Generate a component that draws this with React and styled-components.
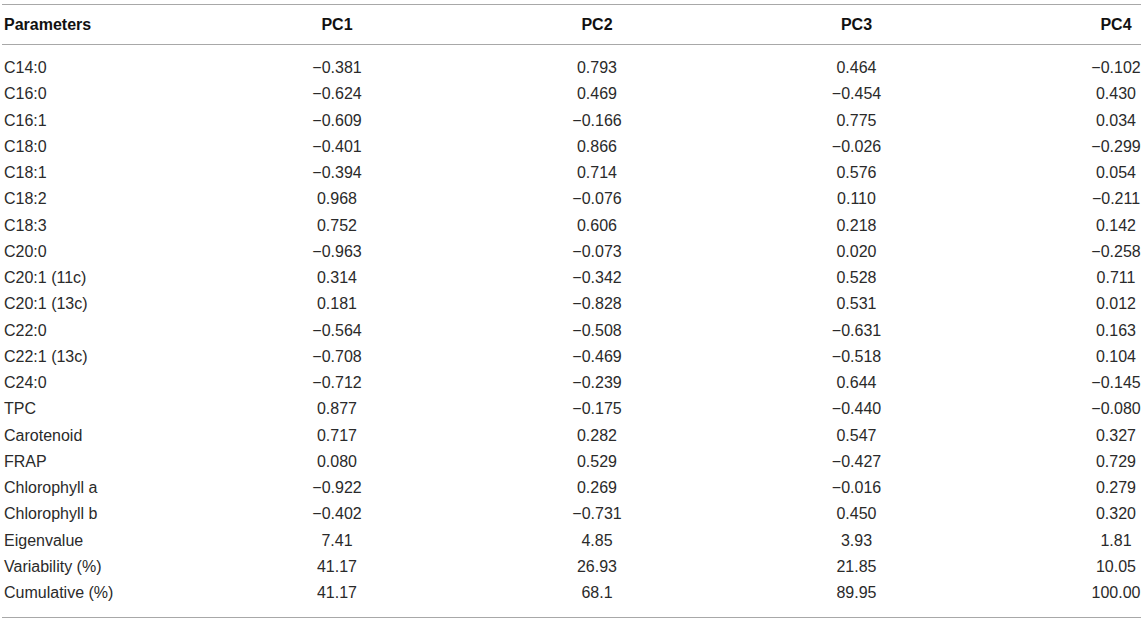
import React from 'react';
import styled, { createGlobalStyle } from 'styled-components';

const GlobalStyle = createGlobalStyle`
  body {
    margin: 0;
    background: #ffffff;
    font-family: "Liberation Sans", Arial, Helvetica, sans-serif;
  }
`;

const columns = ['Parameters', 'PC1', 'PC2', 'PC3', 'PC4'];

const rows = [
  ['C14:0', '−0.381', '0.793', '0.464', '−0.102'],
  ['C16:0', '−0.624', '0.469', '−0.454', '0.430'],
  ['C16:1', '−0.609', '−0.166', '0.775', '0.034'],
  ['C18:0', '−0.401', '0.866', '−0.026', '−0.299'],
  ['C18:1', '−0.394', '0.714', '0.576', '0.054'],
  ['C18:2', '0.968', '−0.076', '0.110', '−0.211'],
  ['C18:3', '0.752', '0.606', '0.218', '0.142'],
  ['C20:0', '−0.963', '−0.073', '0.020', '−0.258'],
  ['C20:1 (11c)', '0.314', '−0.342', '0.528', '0.711'],
  ['C20:1 (13c)', '0.181', '−0.828', '0.531', '0.012'],
  ['C22:0', '−0.564', '−0.508', '−0.631', '0.163'],
  ['C22:1 (13c)', '−0.708', '−0.469', '−0.518', '0.104'],
  ['C24:0', '−0.712', '−0.239', '0.644', '−0.145'],
  ['TPC', '0.877', '−0.175', '−0.440', '−0.080'],
  ['Carotenoid', '0.717', '0.282', '0.547', '0.327'],
  ['FRAP', '0.080', '0.529', '−0.427', '0.729'],
  ['Chlorophyll a', '−0.922', '0.269', '−0.016', '0.279'],
  ['Chlorophyll b', '−0.402', '−0.731', '0.450', '0.320'],
  ['Eigenvalue', '7.41', '4.85', '3.93', '1.81'],
  ['Variability (%)', '41.17', '26.93', '21.85', '10.05'],
  ['Cumulative (%)', '41.17', '68.1', '89.95', '100.00'],
];

const App = () => (
  <>
    <GlobalStyle />
    <Table>
      <HeaderRow>
        {columns.map((c, i) => (
          <HeadCell key={c} $first={i === 0} $last={i === columns.length - 1}>
            {c}
          </HeadCell>
        ))}
      </HeaderRow>
      <Body>
        {rows.map((r) => (
          <Row key={r[0]}>
            {r.map((v, i) => (
              <Cell key={i} $first={i === 0} $last={i === r.length - 1}>
                {v}
              </Cell>
            ))}
          </Row>
        ))}
      </Body>
    </Table>
  </>
);

// Styled Components
const grid = `
  display: grid;
  grid-template-columns: 205px 260px 260px 259px 155px;
  align-items: center;
`;

const Table = styled.div`
  margin: 4px 0 0 2px;
  width: 1139px;
  border-top: 1px solid #a8a8a8;
  border-bottom: 1px solid #a8a8a8;
`;

const HeaderRow = styled.div`
  ${grid}
  height: 39px;
  border-bottom: 1px solid #a8a8a8;
`;

const Body = styled.div`
  padding: 10px 0 11px;
`;

const Row = styled.div`
  ${grid}
  height: 26.25px;
`;

const Cell = styled.div`
  font-size: 16px;
  line-height: 1;
  color: #2a2a2a;
  white-space: nowrap;
  text-align: ${(p) => (p.$first ? 'left' : 'center')};
  padding-left: ${(p) => (p.$first ? '2px' : p.$last ? '105px' : '0')};
`;

const HeadCell = styled(Cell)`
  font-weight: bold;
  color: #111;
`;

export default App;
